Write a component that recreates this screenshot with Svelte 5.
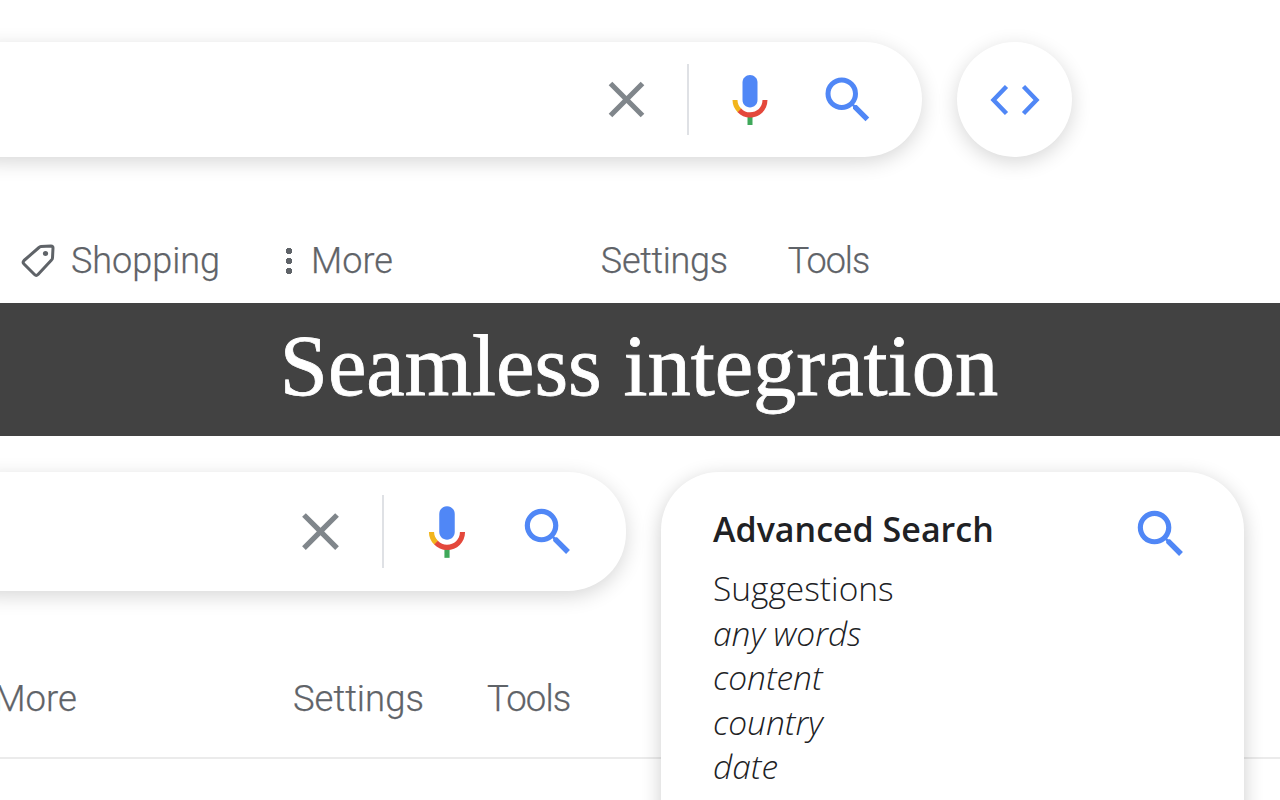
<script>
	const links = ['any words', 'content', 'country', 'date', 'numeric'];
</script>

{#snippet clearIcon(cls)}
	<svg class={cls} viewBox="0 0 24 24"><path fill="#80868b" d="M19 6.41L17.59 5 12 10.59 6.41 5 5 6.41 10.59 12 5 17.59 6.41 19 12 13.41 17.59 19 19 17.59 13.41 12z" /></svg>
{/snippet}

{#snippet micIcon(cls)}
	<svg class={cls} viewBox="0 0 24 24">
		<path fill="#5087f6" d="m12 15c1.66 0 3-1.31 3-2.97v-7.02c0-1.66-1.34-3.01-3-3.01s-3 1.34-3 3.01v7.02c0 1.66 1.34 2.97 3 2.97z" />
		<path fill="#3fa85a" d="m11 18.08h2v3.92h-2z" />
		<path fill="#f2b51c" d="m7.05 16.87c-1.27-1.33-2.05-2.83-2.05-4.87h2c0 1.45 0.56 2.42 1.47 3.38v0.32l-1.15 1.18z" />
		<path fill="#e4483b" d="m12 16.93a4.97 5.25 0 0 1 -3.54 -1.55l-1.41 1.49c1.26 1.34 3.02 2.13 4.95 2.13 3.87 0 6.99-2.92 6.99-7h-1.99c0 2.92-2.24 4.93-5 4.93z" />
	</svg>
{/snippet}

{#snippet searchIcon(cls)}
	<svg class={cls} viewBox="0 0 24 24"><path fill="#5087f6" d="M15.5 14h-.79l-.28-.27A6.471 6.471 0 0 0 16 9.5 6.5 6.5 0 1 0 9.5 16c1.61 0 3.09-.59 4.23-1.57l.27.28v.79l5 4.99L20.49 19l-4.99-5zm-6 0C7.01 14 5 11.99 5 9.5S7.01 5 9.5 5 14 7.01 14 9.5 11.99 14 9.5 14z" /></svg>
{/snippet}

<main>
	<section class="top">
		<div class="search-row">
			<div class="bar">
				{@render clearIcon('clear')}
				<span class="divider"></span>
				{@render micIcon('mic')}
				{@render searchIcon('search')}
			</div>
			<button class="code" aria-label="Code">
				<svg viewBox="0 0 50 30"><path fill="none" stroke="#5087f6" stroke-width="4.4" d="M16.5 1.5 3.5 15l13 13.5M33.5 1.5 46.5 15l-13 13.5" /></svg>
			</button>
		</div>
		<nav class="tabs">
			<span class="tab shopping">
				<svg viewBox="0 0 34 34"><path fill="none" stroke="#5f6368" stroke-width="3" stroke-linejoin="round" d="M20 2.5 30 2a2 2 0 0 1 2 2l-.5 10a3 3 0 0 1-1 2L17 30.5a2.5 2.5 0 0 1-3.5 0L3 20a2.5 2.5 0 0 1 0-3.5L18 3.5a3 3 0 0 1 2-1z" /><circle cx="24.5" cy="9.5" r="2.6" fill="#5f6368" /></svg>
				Shopping
			</span>
			<span class="tab more"><i></i>More</span>
			<span class="tab settings">Settings</span>
			<span class="tab tools">Tools</span>
		</nav>
	</section>

	<h1>Seamless integration</h1>

	<section class="bottom">
		<hr />
		<div class="left">
			<div class="bar small">
				{@render clearIcon('clear')}
				<span class="divider"></span>
				{@render micIcon('mic')}
				{@render searchIcon('search')}
			</div>
			<nav class="tabs small">
				<span class="tab more-cut">More</span>
				<span class="tab settings">Settings</span>
				<span class="tab tools">Tools</span>
			</nav>
		</div>
		<aside class="card">
			<div class="card-head">
				<h2>Advanced Search</h2>
				{@render searchIcon('search')}
			</div>
			<p>Suggestions</p>
			{#each links as link}
				<p class="link">{link}</p>
			{/each}
		</aside>
	</section>
</main>

<style>
	:global(body) {
		margin: 0;
		background: #fff;
		overflow: hidden;
	}

	main {
		width: 1280px;
		height: 800px;
		overflow: hidden;
		font-family: Roboto, "Liberation Sans", sans-serif;
	}

	.top {
		height: 303px;
		box-sizing: border-box;
		padding-top: 42px;
	}

	.search-row {
		display: flex;
		gap: 35px;
	}

	.bar {
		display: flex;
		align-items: center;
		justify-content: flex-end;
		flex: none;
		box-sizing: border-box;
		width: 982px;
		height: 115px;
		margin-left: -60px;
		padding-right: 44px;
		background: #fff;
		border-radius: 58px;
		box-shadow: 0 5px 20px rgba(0, 0, 0, 0.16);
	}

	.clear {
		width: 61px;
		height: 61px;
	}

	.divider {
		width: 2px;
		height: 71px;
		margin: 0 31px 0 30px;
		background: #dfe1e5;
	}

	.mic {
		width: 60px;
		height: 60px;
		margin-right: 38px;
	}

	.search {
		width: 60px;
		height: 60px;
	}

	.code {
		display: flex;
		align-items: center;
		justify-content: center;
		width: 115px;
		height: 115px;
		padding: 0;
		border: 0;
		border-radius: 50%;
		background: #fff;
		box-shadow: 0 5px 20px rgba(0, 0, 0, 0.16);
	}

	.code svg {
		width: 50px;
		height: 30px;
	}

	.tabs {
		display: flex;
		align-items: center;
		height: 40px;
		margin-top: 84px;
		font-size: 36px;
		font-weight: 300;
		color: #5f6368;
		-webkit-text-stroke: 0.25px #5f6368;
	}

	.tab {
		display: flex;
		align-items: center;
		white-space: nowrap;
	}

	.shopping {
		margin-left: 21px;
	}

	.shopping svg {
		width: 34px;
		height: 34px;
		margin-right: 16px;
	}

	.more {
		margin-left: 66px;
	}

	.more i {
		width: 6px;
		height: 26px;
		margin-right: 19px;
		background: radial-gradient(circle at 3px 3px, #5f6368 3px, transparent 3.5px) 0 0 / 6px 10px repeat-y;
	}

	.settings {
		margin-left: 208px;
		letter-spacing: -0.3px;
	}

	.tools {
		margin-left: 60px;
		letter-spacing: -1px;
	}

	h1 {
		display: flex;
		align-items: center;
		justify-content: center;
		height: 133px;
		margin: 0;
		padding: 0 2px 8px 0;
		box-sizing: border-box;
		background: #424242;
		color: #fff;
		font-family: "Liberation Serif", serif;
		font-size: 86.5px;
		font-weight: 400;
		-webkit-text-stroke: 0.8px #fff;
	}

	.bottom {
		display: flex;
		position: relative;
		padding-top: 36px;
	}

	hr {
		position: absolute;
		top: 321px;
		left: 0;
		width: 100%;
		height: 2px;
		margin: 0;
		border: 0;
		background: #ebebeb;
	}

	.left {
		flex: none;
		width: 661px;
	}

	.bar.small {
		width: 686px;
		height: 119px;
		padding-right: 47px;
	}

	.bar.small .clear {
		width: 63px;
		height: 63px;
	}

	.bar.small .divider {
		height: 73px;
		margin: 0 32px 0 30px;
	}

	.bar.small .mic {
		width: 62px;
		height: 62px;
		margin-right: 39px;
	}

	.bar.small .search {
		width: 62px;
		height: 62px;
	}

	.tabs.small {
		height: 40px;
		margin-top: 87px;
		font-size: 36.5px;
	}

	.more-cut {
		margin-left: -6px;
	}

	.tabs.small .settings {
		margin-left: 216px;
		letter-spacing: 0;
	}

	.tabs.small .tools {
		margin-left: 63px;
		letter-spacing: -0.8px;
	}

	.card {
		flex: none;
		position: relative;
		z-index: 1;
		box-sizing: border-box;
		width: 583px;
		height: 500px;
		padding: 32px 53px 32px 52px;
		background: #fff;
		border-radius: 58px;
		box-shadow: 0 5px 20px rgba(0, 0, 0, 0.2);
		font-family: "Open Sans", sans-serif;
		color: #202124;
	}

	.card-head {
		display: flex;
		align-items: center;
		justify-content: space-between;
		height: 50px;
		margin-bottom: 12px;
	}

	h2 {
		margin: 0;
		font-size: 34px;
		font-weight: 600;
	}

	.card-head .search {
		width: 62px;
		height: 62px;
		margin: 9px -1px 0 0;
	}

	p {
		margin: 0;
		font-size: 33.5px;
		line-height: 44.5px;
		font-weight: 300;
	}

	.link {
		font-style: italic;
	}
</style>
